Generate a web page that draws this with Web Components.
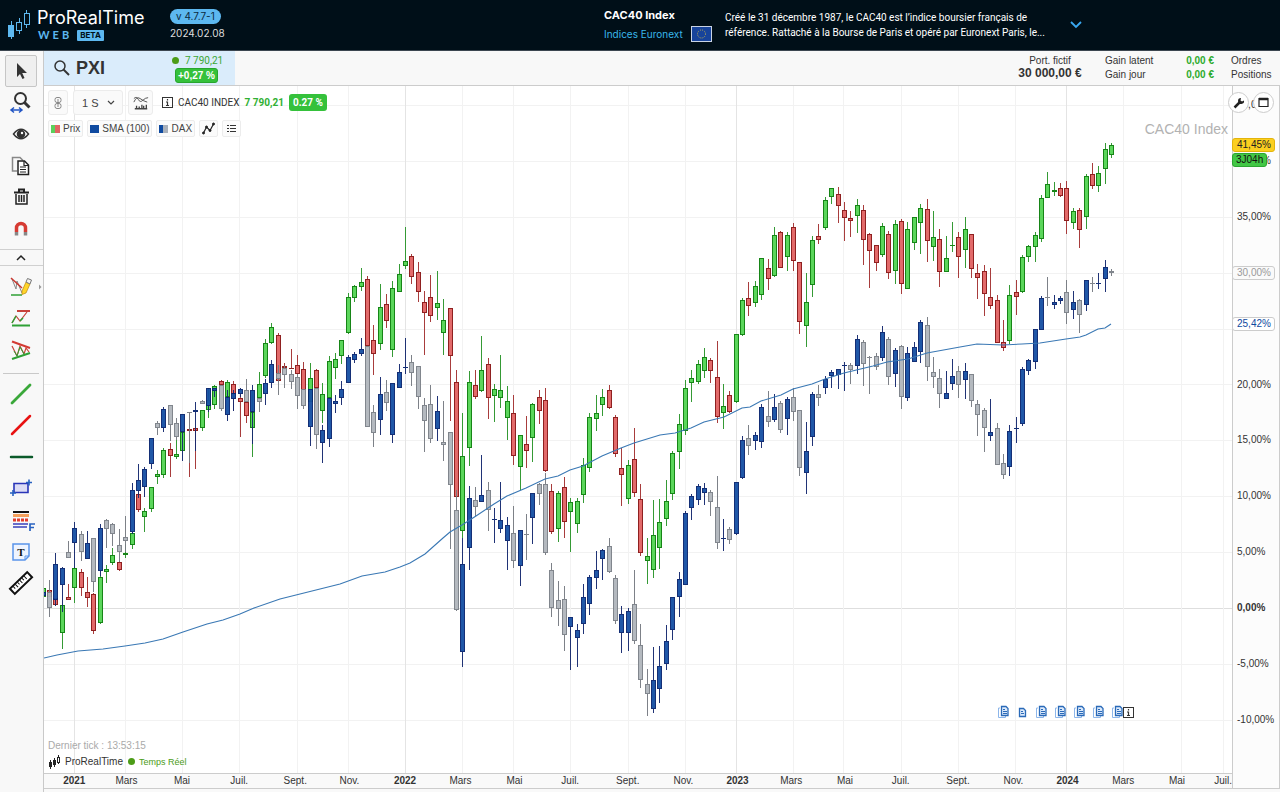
<!DOCTYPE html>
<html lang="fr">
<head>
<meta charset="utf-8">
<title>ProRealTime Web - CAC40 Index</title>
<style>
html,body{margin:0;height:100%}
body{font-family:"Liberation Sans",Arial,sans-serif;font-size:10px;color:#333;background:#f8f8f8}
prt-app{min-height:100%}
</style>
</head>
<body>
<prt-app></prt-app>

<template id="t-app">
<style>
:host{display:flex;flex-direction:column}
.body{flex:1;display:flex}
main{flex:1;display:flex;flex-direction:column;min-width:0}
prt-chart{flex:1}
</style>
<prt-header></prt-header>
<div class="body">
  <prt-sidebar></prt-sidebar>
  <main><prt-quotebar></prt-quotebar><prt-chart></prt-chart></main>
</div>
</template>

<template id="t-header">
<style>
:host{display:flex;align-items:center;height:50px;border-bottom:1px solid #3c4650;background:#000f18;color:#fff;font-family:Inter,sans-serif}
.logo{margin-left:7px;width:24px;height:32px;margin-bottom:4px}
.brand{margin-left:6px;width:133px}
.name{font:400 18px/18px Inter,sans-serif;display:block}
.sub{display:flex;align-items:center;gap:5px;margin-top:2px;height:12px;color:#5db8f0}
.web{font:700 11px/12px Lato,sans-serif;letter-spacing:3px;margin-left:1px}
.beta{background:#5db8f0;color:#000f18;font:700 8px/11px Inter,sans-serif;padding:0 3px;border-radius:1px}
.ver{display:flex;flex-direction:column;align-items:flex-start;gap:2px}
.ver b{font-weight:400;font-size:10px;line-height:15px;background:#5db8f0;color:#0b2a40;border-radius:8px;padding:0 6px}
.ver span{font-size:10px;line-height:15px;color:#ddd}
.info{margin-left:auto;margin-right:197px;display:flex;align-items:center}
.title{display:grid;grid-template-columns:87px 22px;row-gap:3px;align-items:center;margin-right:12px}
.title b{font-size:11px;line-height:15px;grid-column:1/3}
.title a{color:#39b6ea;font-size:10px;line-height:15px;text-decoration:none}
.title svg{width:21px;height:16px}
p{margin:0 0 1px;width:338px;font:10px/15px Roboto,sans-serif;white-space:nowrap}
button{border:0;background:none;padding:0;margin-left:6px;width:14px;height:14px}
button svg{display:block}
</style>
<svg class="logo" viewBox="0 0 24 32" fill="none" stroke="#5db8f0"><path d="M4.500 14v4M4.500 30v3M12.500 11v4M12.500 24v3M19.500 3v3M19.500 18v3"/><rect x="1.500" y="18.500" width="5" height="11" fill="#5db8f0"/><rect x="9.500" y="15.500" width="5" height="8"/><rect x="17.500" y="6.500" width="5" height="11"/></svg>
<div class="brand"><span class="name">ProRealTime</span><div class="sub"><span class="web">WEB</span><span class="beta">BETA</span></div></div>
<div class="ver"><b>v 4.7.7-1</b><span>2024.02.08</span></div>
<div class="info">
 <div class="title"><b>CAC40 Index</b><a href="#euronext">Indices Euronext</a>
 <svg viewBox="0 0 21 16"><rect x=".5" y=".5" width="20" height="15" fill="#17439a" stroke="#c9d3e4"/><circle cx="10.500" cy="8" r="4" fill="none" stroke="#b5a955" stroke-dasharray="1 1.100"/></svg></div>
 <p>Créé le 31 décembre 1987, le CAC40 est l’indice boursier français de<br>référence. Rattaché à la Bourse de Paris et opéré par Euronext Paris, le...</p>
 <button aria-label="Déplier"><svg width="14" height="14" viewBox="0 0 14 14"><path d="M2 4l5 5 5-5" fill="none" stroke="#39a8f0" stroke-width="1.800"/></svg></button>
</div>
</template>

<template id="t-tool">
<style>
:host{display:flex;align-items:center;justify-content:center}
button{width:32px;height:100%;box-sizing:border-box;padding:0;border:1px solid transparent;background:none;border-radius:2px;display:flex;align-items:center;justify-content:center}
:host([active]) button{background:#efefef;border-color:#c6c6c6}
</style>
<button><slot></slot></button>
</template>

<template id="t-sidebar">
<style>
:host{display:block;width:43px;flex:none;background:#f8f8f8;border-right:1px solid #c9c9c9}
section{display:grid;grid-auto-rows:1fr;padding-right:1px}
.a{height:190px;padding-top:4px}
.b{height:95px;padding-top:5px}
.c{height:221px;padding-top:4px}
.fold{display:block;width:100%;height:17px;margin-top:4px;padding:0 1px 0 0;border:solid #d0d0d0;border-width:1px 0;background:#f8f8f8}
.fold svg{display:block;margin:auto}
hr{width:36px;margin:7px 0 0 3px;border:0;border-top:1px solid #c9c9c9}
svg{width:24px;height:24px;flex:none;fill:none;stroke-width:1.500;overflow:visible}
.fold svg{width:12px;height:8px}
</style>
<section class="a">
<prt-tool active><svg viewBox="0 0 24 24"><path d="M8 4v14l3-3 2.500 5 2-1-2.300-5H18z" fill="#333"/></svg></prt-tool>
<prt-tool><svg viewBox="0 0 24 24" stroke="#333"><circle cx="11.500" cy="8.500" r="5.500" stroke-width="2"/><path d="M15.500 12.500l5 5" stroke-width="3"/><path d="M2 20h11M5 17.500L2 20l3 2.500M10 17.500l3 2.500-3 2.500" stroke="#2255c4"/></svg></prt-tool>
<prt-tool><svg viewBox="0 0 24 24" stroke="#333"><path d="M4.500 12q7.500-9.500 15 0q-7.500 9.500-15 0z"/><circle cx="12" cy="12" r="3.500" fill="#333"/><circle cx="13" cy="11" r="1.200" fill="#fff" stroke="none"/></svg></prt-tool>
<prt-tool><svg viewBox="0 0 24 24"><path d="M8 17H3.500V3.500h7.500l3 3" stroke="#888"/><path d="M9 7h6.500l4 4v9.500H9z" fill="#fff" stroke="#222"/><path d="M15 7v4.500h4.500M11 13h6M11 15.500h6M11 18h6" stroke="#222" stroke-width="1.200"/></svg></prt-tool>
<prt-tool><svg viewBox="0 0 24 24" stroke="#222"><path d="M5 7.500h15M10 7V4.500h5V7" stroke-width="2"/><path d="M7 9v10h11V9M10 10v7M12.500 10v7M15 10v7" /></svg></prt-tool>
<prt-tool><svg viewBox="0 0 24 24"><path d="M7.500 15v-4a4.500 4.500 0 0 1 9 0v4" stroke="#d63b33" stroke-width="3.500"/><path d="M7.500 15v3.500M16.500 15v3.500" stroke="#888" stroke-width="3.500"/></svg></prt-tool>
</section>
<button class="fold" aria-label="Replier"><svg viewBox="0 0 12 8" stroke="#222" stroke-width="2"><path d="M2 6l4-4 4 4"/></svg></button>
<section class="b">
<prt-tool><svg viewBox="0 0 24 24"><path d="M3 4l4 10 1-8 5 12" stroke="#888" stroke-width="1"/><path d="M2 3l11 10" stroke="#c8362e"/><path d="M2 20h11" stroke="#2fa136"/><path d="M13 16l4-9 4 2-4 9-4 1.500z" fill="#ffd42a" stroke="#b8860b" stroke-width=".7"/><path d="M17 7l1.500-3.500 4 1.500-1.500 4z" fill="#f3f3f3" stroke="#777" stroke-width="1"/><path d="M30 9.500v5l2.500-2.500z" fill="#999"/></svg></prt-tool>
<prt-tool><svg viewBox="0 0 24 24"><path d="M3 17l4-7 4 5 7-9" stroke="#c8423a" stroke-width="1.200"/><path d="M3 17l4-7M14 12l-3 3" stroke="#2fa136"/><path d="M8 5h13" stroke="#c8423a" stroke-width="2"/><path d="M3 19.500h18" stroke="#2fa136" stroke-width="2"/></svg></prt-tool>
<prt-tool><svg viewBox="0 0 24 24"><path d="M3 8l5 10 3-10 4 8 2-6 3 4" stroke="#c8423a" stroke-width="1.200"/><path d="M5 13l3 5 3-9 4 7" stroke="#2fa136" stroke-width="1"/><path d="M3 3.500L21 10" stroke="#d33a33" stroke-width="2"/><path d="M3 21l18-6" stroke="#2fa136" stroke-width="2"/></svg></prt-tool>
</section>
<hr>
<section class="c">
<prt-tool><svg viewBox="0 0 24 24"><path d="M3 21L21 3" stroke="#3aa83a" stroke-width="2.800" stroke-linecap="round"/></svg></prt-tool>
<prt-tool><svg viewBox="0 0 24 24"><path d="M3 21L21 3" stroke="#e81212" stroke-width="2.500" stroke-linecap="round"/></svg></prt-tool>
<prt-tool><svg viewBox="0 0 24 24"><path d="M2 12h21" stroke="#0b5a2a" stroke-width="2.500" stroke-linecap="round"/></svg></prt-tool>
<prt-tool><svg viewBox="0 0 24 24" stroke="#2a35b8"><path d="M5 7.500h14v9H5z" fill="#dcdcf5" stroke-width="1.600"/><path d="M20 3.500v6M17 6.500h6M4 14v6M1 17h6" stroke="#2862c0" stroke-width="1.600"/></svg></prt-tool>
<prt-tool><svg viewBox="0 0 24 24"><path d="M4 4h16" stroke="#111" stroke-width="2"/><path d="M4 7.500h16" stroke="#f5a05c" stroke-width="3"/><path d="M4 12h16" stroke="#e23c2c" stroke-width="3" stroke-dasharray="3 1"/><path d="M4 16h15M4 19h14" stroke="#383fba" stroke-width="1.500"/><path d="M21 23v-7h5M21 19.500h4" stroke="#2862c0" stroke-width="1.700"/></svg></prt-tool>
<prt-tool><svg viewBox="0 0 24 24"><path d="M4 4h16v12l-4 4H4z" fill="#eef4ff" stroke="#5a94ea"/><path d="M20 16h-4v4" stroke="#5a94ea" stroke-width="1"/><text x="12" y="16" text-anchor="middle" fill="#111" style="font:700 11px 'Liberation Serif',serif">T</text></svg></prt-tool>
<prt-tool><svg viewBox="0 0 24 24" stroke="#111"><g transform="rotate(-44 12 12)"><rect x="0" y="8.500" width="24" height="7" fill="#fff" stroke-width="2"/><path d="M4 9v3M7 9v4M10 9v3M13 9v4M16 9v3M19 9v4" stroke-width="1"/></g></svg></prt-tool>
</section>
</template>

<template id="t-quotebar">
<style>
:host{display:flex;height:34px;border-bottom:1px solid #ccc;background:#f8f8f8}
.sym{width:191px;background:#daecfb;display:flex;align-items:center}
.sym>svg{margin-left:9px;width:18px;height:18px}
h1{margin:0 0 0 5px;width:96px;font-size:18px;line-height:22px}
.q{width:60px;display:flex;flex-direction:column;align-items:flex-start}
.q span{display:flex;align-items:center;gap:6px;color:#3aa634;line-height:14px;font-family:Roboto,sans-serif;white-space:nowrap}
.q i{width:7px;height:7px;border-radius:50%;background:#4c9c17}
.q b{margin-left:3px;background:#35c13b;border:1px solid #28a52e;color:#fff;border-radius:3px;line-height:13px;padding:0 2px;white-space:nowrap}
.port{margin-left:auto;width:100px;text-align:center;line-height:13px;padding-top:3px}
.port b{display:block;font-size:12px;line-height:13px}
table{margin-left:5px;border-spacing:0;width:109px;margin-top:3px;align-self:flex-start}
th,td{padding:0;font-weight:400;line-height:14px;text-align:left}
td{text-align:right;color:#2cab2c;font-weight:700}
nav{display:flex;flex-direction:column;padding:3px 0 0 17px;width:49px}
nav a{color:#333;text-decoration:none;line-height:14px}
</style>
<div class="sym"><svg viewBox="0 0 18 18" fill="none" stroke="#333"><circle cx="7" cy="7" r="5" stroke-width="1.500"/><path d="M10.500 10.500l5.500 5.500" stroke-width="2"/></svg><h1>PXI</h1>
<div class="q"><span><i></i>7 790,21</span><b>+0,27 %</b></div></div>
<div class="port">Port. fictif<b>30 000,00 €</b></div>
<table><tr><th scope="row">Gain latent</th><td>0,00 €</td></tr><tr><th scope="row">Gain jour</th><td>0,00 €</td></tr></table>
<nav><a href="#ordres">Ordres</a><a href="#positions">Positions</a></nav>
</template>

<template id="t-chip">
<style>
:host{display:block}
button{display:flex;align-items:center;gap:3px;height:17px;padding:0 2px;border:1px solid #ececec;border-radius:2px;background:#fbfbfb;color:#444;font:10px/15px "Liberation Sans",sans-serif;white-space:nowrap}
i{width:9px;height:8px;background:linear-gradient(90deg,var(--a) 50%,var(--b) 50%)}
:host([icon]) i{display:none}
</style>
<button><i></i><slot></slot></button>
</template>

<template id="t-chart">
<style>
:host{display:grid;position:relative;grid-template-columns:1fr 48px;grid-template-rows:1fr 14px 4px;background:#f9f9f9}
prt-plot,.over{grid-area:1/1}
prt-prices{grid-area:1/2/3/3}
prt-times{grid-area:2/1}
.foot{grid-area:3/1/4/3;border-top:1px solid #ccc}
.over{display:flex;flex-direction:column;position:relative}
.row{display:flex;align-items:center}
.bar{margin:4px 0 0 4px;gap:5px;font-family:Roboto,sans-serif}
.box{box-sizing:border-box;height:25px;padding:0;border:1px solid #ececec;border-radius:3px;background:#fafafa;display:flex;align-items:center;justify-content:center}
.link{width:20px}.ind{width:25px}
.sel{display:grid;align-items:center}
.sel select,.sel svg{grid-area:1/1}
.sel svg{justify-self:end;margin-right:8px;pointer-events:none}
select{appearance:none;width:50px;height:25px;padding:0 0 0 8px;border:1px solid #ececec;border-radius:3px;background:#fafafa;color:#444;font:11px "Liberation Sans",sans-serif}
.bar .i{margin-left:4px}
.bar b{color:#30b033}
.bar .pct{color:#fff;background:#35c13b;border-radius:3px;line-height:17px;padding:0 4px}
.legend{margin:5px 0 0 4px;gap:4px}
.wm{position:absolute;right:4px;top:35px;font-size:14px;line-height:17px;color:#b2b2b2}
.news{margin-top:auto;justify-content:flex-end;gap:7px;padding-right:98px}
.news svg{width:12px;height:14px}
.news .in{margin-left:-7px;width:11px}
.tick{margin:20px 0 0 4px;line-height:14px;color:#aaa}
.live{margin:0 0 4px 4px;gap:4px;height:17px;color:#333}
.live i{width:7px;height:7px;border-radius:50%;background:#4c9c17;margin-left:1px}
.live em{font-style:normal;color:#4c9c17;font-size:9px}
.win{position:absolute;top:6px;right:6px;display:flex;gap:4px}
.win button{width:21px;height:21px;padding:0;border:1px solid #ccc;border-radius:50%;background:#fff;display:flex;align-items:center;justify-content:center}
</style>
<prt-plot></prt-plot>
<div class="over">
 <div class="row bar">
  <button class="box link" aria-label="Lier"><svg width="10" height="14" viewBox="0 0 10 14" fill="none" stroke="#888"><rect x="2" y="1.500" width="6" height="5" rx="2"/><rect x="2" y="7.500" width="6" height="5" rx="2"/><path d="M4 4h2M4 10h2M5 5v4"/></svg></button>
  <label class="sel"><select aria-label="Unité de temps"><option>1 S</option></select><svg width="8" height="6" viewBox="0 0 8 6" fill="none" stroke="#444" stroke-width="1.200"><path d="M1 1l3 3 3-3"/></svg></label>
  <button class="box ind" aria-label="Indicateurs"><svg width="16" height="16" viewBox="0 0 18 16" fill="none" stroke="#444"><path d="M1 7q3-7 7-4t8 4M1 3q3-3 5 1t5 1 6-3"/><path d="M2 14.500h14M4 14v-3M7 14v-2M10 14v-4M12 14v-3M15 14v-4" stroke-width="1.500"/></svg></button>
  <svg class="i" width="11" height="11" viewBox="0 0 11 11" fill="none" stroke="#333"><rect x=".5" y=".5" width="10" height="10"/><path d="M5.500 2v1.500M4 5h1.500v3.500M4 8.500h3" stroke-width="1.200"/></svg>
  <span>CAC40 INDEX</span><b>7 790,21</b><b class="pct">0.27 %</b>
 </div>
 <div class="row legend">
  <prt-chip style="--a:#5bd05b;--b:#e06464">Prix</prt-chip>
  <prt-chip style="--a:#0f4aa0;--b:#0f4aa0">SMA (100)</prt-chip>
  <prt-chip style="--a:#0f4aa0;--b:#a9b0ba">DAX</prt-chip>
  <prt-chip icon><svg width="13" height="13" viewBox="0 0 13 13" fill="#222" stroke="#222"><path d="M1.500 11l3-6 3.500 3.500L11.500 2" fill="none" stroke-width="1.200"/><circle cx="1.500" cy="11" r="1"/><circle cx="4.500" cy="5" r="1"/><circle cx="8" cy="8.500" r="1"/><circle cx="11.500" cy="2" r="1"/></svg></prt-chip>
  <prt-chip icon><svg width="13" height="13" viewBox="0 0 13 13" stroke="#333"><path d="M2 3.500h2M5 3.500h6M2 6.500h2M5 6.500h6M2 9.500h2M5 9.500h6"/></svg></prt-chip>
 </div>
 <span class="wm">CAC40 Index</span>
 <div class="row news"></div>
 <div class="row tick">Dernier tick : 13:53:15</div>
 <div class="row live"><svg width="13" height="14" viewBox="0 0 13 14" fill="#fff" stroke="#222"><path d="M2.500 5v9M6.500 3v9M10.500 0v9"/><rect x="1.500" y="7.500" width="2" height="4" fill="#222"/><rect x="5.500" y="5.500" width="2" height="4" fill="#222"/><rect x="9.500" y="2.500" width="2" height="5"/></svg><span>ProRealTime</span><i></i><em>Temps Réel</em></div>
</div>
<prt-prices></prt-prices><prt-times></prt-times><div class="foot"></div>
<div class="win"><button aria-label="Réglages"><svg width="12" height="12" viewBox="0 0 12 12"><path d="M1.500 10.500l5-5" stroke="#222" stroke-width="2.500"/><path d="M11 3.500A3 3 0 1 1 8 1L7.500 3.500l1.500 1z" fill="#222"/></svg></button><button aria-label="Fenêtre"><svg width="11" height="11" viewBox="0 0 11 11"><path d="M1 1.500h9v8H1z" fill="none" stroke="#222" stroke-width="1.200"/><path d="M1 2h9" stroke="#222" stroke-width="2.500"/></svg></button></div>
</template>

<template id="t-plot">
<style>
:host{display:block;background:#fff;position:relative;min-height:400px;border-bottom:1px solid #ccc}
svg{position:absolute;inset:0;width:100%;height:100%;display:block}
</style>
<svg viewBox="44 86 1188 687" preserveAspectRatio="none" role="img" aria-label="CAC40, DAX et SMA (100)"></svg>
</template>

<template id="t-prices">
<style>
:host{display:block;position:relative;border-left:1px solid #ccc;border-right:1px solid #ccc;background:#fcfcfc}
ol{list-style:none;margin:0;box-sizing:border-box;height:100%;padding:12px 0 61px;display:flex;flex-direction:column;justify-content:space-between}
li{line-height:14px;height:14px;padding-left:4px;white-space:nowrap}
li.zero{font-weight:700}
.tag{position:absolute;left:-1px;box-sizing:border-box;height:14px;line-height:12px;padding:0 3px 0 4px;border:1px solid #ccc;border-radius:3px;background:#fff}
.px{top:52px;background:#fbcf1f;border-color:#e3b40c;color:#222}
.cd{top:67px;background:#42c745;border-color:#2da631;color:#111;padding:0 3px}
.hl{top:180px;color:#999;background:#fafafa}
.sma{top:231px;color:#0f4aa0}
</style>
<ol></ol>
<span class="tag px">41,45%</span><span class="tag cd">3J04h</span><span class="tag hl">30,00%</span><span class="tag sma">25,42%</span>
</template>

<template id="t-times">
<style>
:host{display:grid;padding-left:5px;background:#f9f9f9;line-height:14px;text-align:center}
span:last-child{text-align:right}
b,span{white-space:nowrap}
</style>
</template>

<script>
const define = (name, tpl, init) => customElements.define(name, class extends HTMLElement {
  constructor() {
    super();
    const root = this.attachShadow({mode: 'open'});
    root.append(document.getElementById(tpl).content.cloneNode(true));
    if (init) init(root);
  }
});

/* Weekly candles: colour, body top, body bottom, high, low. */
const CAC = `g588,597,584,600 r590,597,590,597 r598,605,598,606 g605,633,605,649 r597,600,584,600 g568,588,567,603 r572,588,569,596 r592,598,577,607
r594,631,593,634 g577,623,575,624 g569,572,565,583 g555,563,548,565 r562,570,561,571 g553,555,544,558 g533,545,532,549 r494,510,493,512
g511,517,508,532 g487,509,487,512 g474,477,470,484 g450,475,448,478 r449,456,443,477 g454,457,440,459 g432,451,432,451 r429,431,412,477
r428,431,428,469 g410,428,410,431 g400,410,388,418 g386,405,385,409 r381,385,380,385 g382,397,380,400 r384,394,381,411 r398,402,395,437
r402,416,402,423 g412,428,390,457 g384,398,372,400 g343,376,339,378 g327,343,323,344 r335,381,333,382 r366,368,363,368 r368,369,349,369
r365,374,355,374 r369,390,362,390 g378,402,363,402 r370,388,369,388 g394,411,383,423 g361,398,356,398 g359,368,353,379 g340,356,340,364
g297,333,293,334 g286,298,285,302 g282,287,268,291 r279,346,276,346 r340,354,325,375 g307,344,284,350 r304,321,294,328 g288,350,281,357
g274,292,264,292 g261,266,227,269 r256,277,254,284 r272,292,262,302 r302,313,291,355 r297,316,275,322 g303,308,271,320 g320,333,299,355
r308,356,308,421 r382,497,370,497 g456,531,413,538 g382,448,371,466 r385,397,370,399 g370,391,336,392 r364,398,358,419 g389,396,384,422
g390,398,355,408 g401,418,386,440 r413,456,395,465 g435,467,435,490 r444,451,416,468 g404,438,403,462 r397,411,390,424 r400,471,388,472
r491,532,484,534 g493,529,491,542 r487,522,477,538 g502,512,498,552 g501,524,498,533 g465,495,458,503 g417,468,413,472 g413,419,395,431
g397,405,389,416 r390,408,385,409 r417,454,415,457 r468,475,448,506 g465,499,460,504 r459,493,428,497 r499,553,484,556 g556,561,538,584
g535,570,500,578 g522,548,499,569 g501,519,480,526 g453,494,451,500 g424,452,414,469 g388,431,380,435 g378,383,370,402 g364,382,360,384
g357,371,348,378 r360,371,358,383 r377,417,341,423 g406,413,384,429 r395,412,391,413 g334,402,334,403 g300,335,298,336 r298,306,282,316
g286,303,281,307 g258,295,258,300 r268,279,259,290 g235,276,227,277 r232,268,231,268 g235,257,232,271 r227,261,223,271 r262,322,262,334
g302,326,273,347 g240,285,236,297 r236,240,224,244 g200,228,197,230 g188,197,188,204 r194,206,187,223 r210,218,202,241 r218,221,211,237
g205,216,199,233 r210,240,205,265 r234,251,233,288 r245,263,245,271 g226,255,223,257 r234,273,231,279 g224,271,220,284 r221,284,219,294
g229,289,222,289 g217,243,217,250 g208,223,204,254 r209,241,199,262 g237,247,211,261 r239,272,229,287 g258,272,236,272 g245,246,222,252
r237,257,232,278 g229,250,217,268 r234,269,234,278 r273,278,264,299 r271,294,265,316 r297,306,268,309 r300,343,295,343 r342,348,320,351
g295,341,285,344 r292,297,280,315 g257,292,255,293 g246,257,245,262 g235,247,232,262 g198,239,195,242 g184,198,172,198 g190,192,182,196
r188,196,183,197 r188,221,181,234 g211,223,208,229 r210,230,208,248 g176,217,174,229 r174,186,163,189 g173,186,166,192 g149,169,143,184
g145,155,143,158`;
const DAX = `b592,596,592,596 y592,608,580,617 b564,600,553,606 b568,585,567,612 y552,558,541,558 b528,543,522,568 y534,552,531,561 b543,559,531,559
y538,582,538,592 b528,571,524,576 y520,529,519,548 y524,534,523,546 y545,552,529,562 y537,541,516,552 b490,532,483,534 b480,491,464,498
b469,487,467,497 b438,464,438,469 y423,428,421,435 b409,428,407,432 y405,425,405,441 y423,437,418,440 b414,432,414,461 y412,413,412,463
b410,412,402,451 y401,404,400,404 b388,406,388,412 b388,391,388,397 y385,409,385,411 b397,415,390,421 b393,399,390,411 b389,394,388,397
y390,402,379,402 b390,412,385,444 y398,402,398,412 b383,394,379,405 b364,383,360,388 y373,379,365,395 y368,375,366,388 y374,382,370,389
y377,396,374,409 y389,406,389,409 b389,427,389,446 y388,435,388,449 b430,443,425,463 b398,439,398,447 b401,404,395,413 b389,398,381,405
b357,383,355,383 b354,360,352,363 b349,354,338,356 y346,427,346,427 y412,433,405,447 b394,420,377,435 y392,403,380,411 b383,435,383,443
b372,388,364,388 b367,368,338,374 y362,373,355,386 y366,397,366,409 y405,421,398,452 y404,439,385,443 b411,429,396,441 y442,445,401,461
y432,485,432,549 y510,610,490,611 b564,652,538,667 b498,548,486,570 y500,507,487,516 b495,502,455,502 y490,510,482,531 b519,520,508,543
b520,529,482,533 b525,541,517,570 y533,561,506,568 b530,566,530,586 y534,535,514,560 b493,518,493,544 y484,494,483,505 y484,553,473,555
y570,608,563,617 y600,609,581,626 y599,635,586,651 b617,627,617,670 b630,638,624,667 b597,624,584,634 b577,604,575,615 b570,578,551,589
b550,559,549,580 y546,572,538,573 y578,621,575,624 b614,633,606,653 b611,633,608,651 y604,641,570,644 y645,680,624,688 y684,694,669,716
b680,709,647,713 b666,689,646,703 b641,664,625,670 b597,630,597,640 b579,597,572,617 b513,585,511,585 b496,508,494,520 b486,500,484,505
b488,493,483,505 y492,502,490,516 y507,543,476,549 b538,539,519,551 y529,540,527,544 b482,534,482,535 b440,478,436,479 y438,446,425,455
b435,441,432,450 b407,442,404,448 y416,422,391,427 b407,420,394,422 y403,430,401,433 b399,419,397,435 y397,412,388,421 y410,468,410,476
b451,473,422,494 b394,437,392,446 y394,398,385,406 b379,388,376,394 b372,376,370,388 b369,375,369,389 b365,366,362,391 y365,370,363,384
b339,366,335,374 y342,364,340,386 y357,358,356,394 y356,367,353,370 b332,358,326,361 y339,377,337,385 b350,374,348,387 y346,397,345,409
b353,398,347,401 b347,362,342,362 b322,352,320,363 y325,367,317,381 y372,377,357,388 y378,394,369,408 b393,399,371,399 b376,384,359,390
y371,385,366,398 b371,380,363,399 y374,401,374,407 y404,415,400,436 y410,428,408,452 b432,436,399,441 y428,465,423,465 y463,475,454,479
b431,467,425,476 b428,429,417,443 b369,424,367,426 b360,371,359,375 b329,362,329,369 b298,330,296,330 y297,298,277,306 b302,305,295,309
b298,301,296,304 y292,313,280,324 b302,310,291,319 y300,315,299,333 b280,305,280,311 y283,284,277,292 b283,284,273,289 b267,279,260,292
y271,273,269,276`;
const SMA = '44,658 57,655 78,651 103,649 125,646 145,643 163,639 183,632 207,624 223,620 240,614 254,608 280,599 300,594 320,589 340,584 362,576 385,572 400,567 410,563 425,554 443,538 450,532 462,525 476,516 494,504 507,496 526,488 545,479 558,476 570,470 583,466 602,456 621,448 634,443 660,435 675,433 691,428 704,422 724,417 742,408 750,407 761,401 781,395 793,389 812,384 825,379 844,373 873,366 887,362 908,359 927,353 960,347 977,344 1003,345 1022,344 1040,343 1066,339 1080,337 1086,335 1098,329 1105,328 1111,324';
const INK = {
  g: ['#5bd65b', '#178517', '#359a35'], r: ['#e26a6a', '#8f2020', '#a83c3c'],
  b: ['#154fa3', '#08246f', '#15296f'], y: ['#b1b6bc', '#7b8087', '#777b82']
};
const TICKS = [74, 125, 182, 239, 297, 348, 405, 462, 513, 570, 628, 685, 736, 793, 843, 901, 958, 1015, 1066, 1123, 1181, 1223];

define('prt-plot', 't-plot', root => {
  let s = '<g shape-rendering="crispEdges">';
  for (let v = 45; v >= -10; v -= 5) {
    const y = Math.round(608 - 11.18 * v);
    s += `<rect x="44" y="${y}" width="1188" height="1" fill="${v ? '#f2f2f2' : '#dedede'}"/>`;
  }
  TICKS.forEach((x, i) => {
    s += `<rect x="${x}" y="86" width="1" height="687" fill="${i % 6 ? '#f2f2f2' : '#e4e4e4'}"/>`;
  });
  s += '</g>';
  const series = src => src.trim().split(/\s+/).map((c, i) => {
    const [fill, edge, wick] = INK[c[0]];
    const [top, bottom, high, low] = c.slice(1).split(',').map(Number);
    const x = Math.round(74.3 + (i - 5) * 6.36);
    const h = bottom - top;
    let o = `<rect x="${x}" y="${high}" width="1" height="${low - high}" fill="${wick}"/>`;
    o += `<rect x="${x - 2}" y="${top}" width="5" height="${h}" fill="${edge}"/>`;
    if (h > 2) o += `<rect x="${x - 1}" y="${top + 1}" width="3" height="${h - 2}" fill="${fill}"/>`;
    return o;
  }).join('');
  s += `<g shape-rendering="crispEdges">${series(CAC)}</g>`;
  s += `<g shape-rendering="crispEdges" opacity=".95">${series(DAX)}</g>`;
  s += `<polyline points="${SMA}" fill="none" stroke="#3a78b4" stroke-width="1.100"/>`;
  root.querySelector('svg').innerHTML = s;
});

define('prt-prices', 't-prices', root => {
  const hidden = [30, 25];
  let s = '';
  for (let v = 45; v >= -10; v -= 5) s += `<li class="${v ? '' : 'zero'}">${hidden.includes(v) ? '' : v + ',00%'}</li>`;
  root.querySelector('ol').innerHTML = s;
});

define('prt-times', 't-times', root => {
  const months = ['', 'Mars', 'Mai', 'Juil.', 'Sept.', 'Nov.'];
  const edges = [49, ...TICKS.slice(1).map((x, i) => (x + TICKS[i]) / 2), 1232];
  root.host.style.gridTemplateColumns = TICKS.map((x, i) => `minmax(0,${edges[i + 1] - edges[i]}fr)`).join(' ');
  TICKS.forEach((x, i) => {
    const el = document.createElement(i % 6 ? 'span' : 'b');
    el.textContent = i % 6 ? months[i % 6] : 2021 + i / 6;
    root.append(el);
  });
});

define('prt-chip', 't-chip');
define('prt-tool', 't-tool');
define('prt-chart', 't-chart', root => {
  const page = '<path d="M4.500 1.500h4.500l2 2v7H4.500z" fill="#dbe9fb" stroke="#2a6ab8" stroke-width="1.300"/><path d="M6 4.500h2M6 6.500h4M6 8.500h4" stroke="#2a6ab8"/>';
  const back = '<path d="M3 3H1.500v9.500h7V11" fill="none" stroke="#8db6ea"/>';
  const single = '<path d="M3.500 3.500h4l2 2v6h-6z" fill="#dbe9fb" stroke="#2a6ab8" stroke-width="1.300"/><path d="M5 6.500h2M5 8.500h3" stroke="#2a6ab8"/>';
  let s = '';
  for (let i = 0; i < 7; i++) s += `<svg viewBox="0 0 12 14">${i === 1 ? single : back + page}</svg>`;
  s += '<svg class="in" viewBox="0 0 11 14" fill="none" stroke="#333"><rect x=".5" y="2.500" width="10" height="10" fill="#fff"/><path d="M5.500 4v1.500M4 7h1.500v3.500M4 10.500h3" stroke-width="1.200"/></svg>';
  root.querySelector('.news').innerHTML = s;
});
define('prt-quotebar', 't-quotebar');
define('prt-sidebar', 't-sidebar');
define('prt-header', 't-header');
define('prt-app', 't-app');
</script>
</body>
</html>
